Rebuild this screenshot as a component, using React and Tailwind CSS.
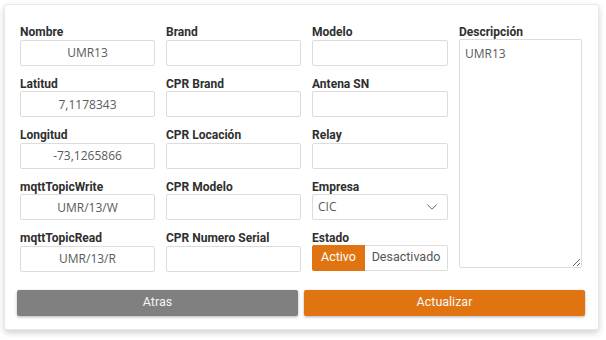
import { ChevronDown } from "lucide-react";

const columns = [
  [
    { label: "Nombre", value: "UMR13" },
    { label: "Latitud", value: "7,1178343" },
    { label: "Longitud", value: "-73,1265866" },
    { label: "mqttTopicWrite", value: "UMR/13/W" },
    { label: "mqttTopicRead", value: "UMR/13/R" },
  ],
  [
    { label: "Brand" },
    { label: "CPR Brand" },
    { label: "CPR Locación" },
    { label: "CPR Modelo" },
    { label: "CPR Numero Serial" },
  ],
];

function Label({ children }) {
  return (
    <div className="h-[14px] text-[12px] leading-[14px] font-bold text-[#2f2f2f] font-['Roboto',sans-serif]">
      {children}
    </div>
  );
}

function Field({ label, value, w }) {
  return (
    <div className="mb-[11px]">
      <Label>{label}</Label>
      <input
        readOnly
        value={value || ""}
        className={`${w} h-[26px] border border-[#dcdcdc] rounded-[2px] bg-white text-center text-[12px] text-[#5a5a5a] font-['Open_Sans',sans-serif] outline-none`}
      />
    </div>
  );
}

export default function App() {
  return (
    <div className="w-[606px] h-[340px] bg-white pt-[4px] pl-[4px]">
      <div className="w-[595px] h-[326px] bg-white border border-[#e8e8e8] rounded-[3px] shadow-[0_3px_6px_rgba(0,0,0,0.18)] pt-[20px]">
        <div className="flex gap-x-[11px] pl-[15px]">
          {columns.map((col, i) => (
            <div key={i} className="flex flex-col">
              {col.map((f) => (
                <Field key={f.label} label={f.label} value={f.value} w="w-[135px]" />
              ))}
            </div>
          ))}

          <div className="flex flex-col w-[136px]">
            <Field label="Modelo" w="w-[136px]" />
            <Field label="Antena SN" w="w-[136px]" />
            <Field label="Relay" w="w-[136px]" />
            <div className="mb-[11px]">
              <Label>Empresa</Label>
              <div className="w-[136px] h-[26px] border border-[#dcdcdc] rounded-[2px] flex items-center justify-between pl-[5px] pr-[6px] text-[12px] text-[#5a5a5a] font-['Open_Sans',sans-serif]">
                <span>CIC</span>
                <ChevronDown size={18} strokeWidth={1.3} className="text-[#666]" />
              </div>
            </div>
            <div>
              <Label>Estado</Label>
              <div className="flex h-[26px] w-[136px] text-[12.5px] font-['Roboto',sans-serif]">
                <div className="w-[53px] bg-[#df7411] text-white flex items-center justify-center rounded-l-[2px]">
                  Activo
                </div>
                <div className="flex-1 border border-l-0 border-[#dcdcdc] rounded-r-[2px] text-[#555] flex items-center justify-center">
                  Desactivado
                </div>
              </div>
            </div>
          </div>

          <div className="flex flex-col w-[123px]">
            <Label>Descripción</Label>
            <textarea
              readOnly
              value="UMR13"
              className="w-[123px] h-[229px] border border-[#dcdcdc] rounded-[2px] px-[5px] py-[5px] text-[12px] text-[#5a5a5a] font-['Open_Sans',sans-serif] outline-none"
            />
          </div>
        </div>

        <div className="flex gap-[6px] pl-[12px] mt-[7px]">
          <button className="w-[281px] h-[26px] bg-[#808080] text-[#f5f5f5] text-[12.5px] font-normal font-['Roboto',sans-serif] rounded-[2px] shadow-[0_1px_3px_rgba(0,0,0,0.3)]">
            Atras
          </button>
          <button className="w-[281px] h-[26px] bg-[#df7411] text-[#f8f8f8] text-[12.5px] font-normal font-['Roboto',sans-serif] rounded-[2px] shadow-[0_1px_3px_rgba(0,0,0,0.3)]">
            Actualizar
          </button>
        </div>
      </div>
    </div>
  );
}
